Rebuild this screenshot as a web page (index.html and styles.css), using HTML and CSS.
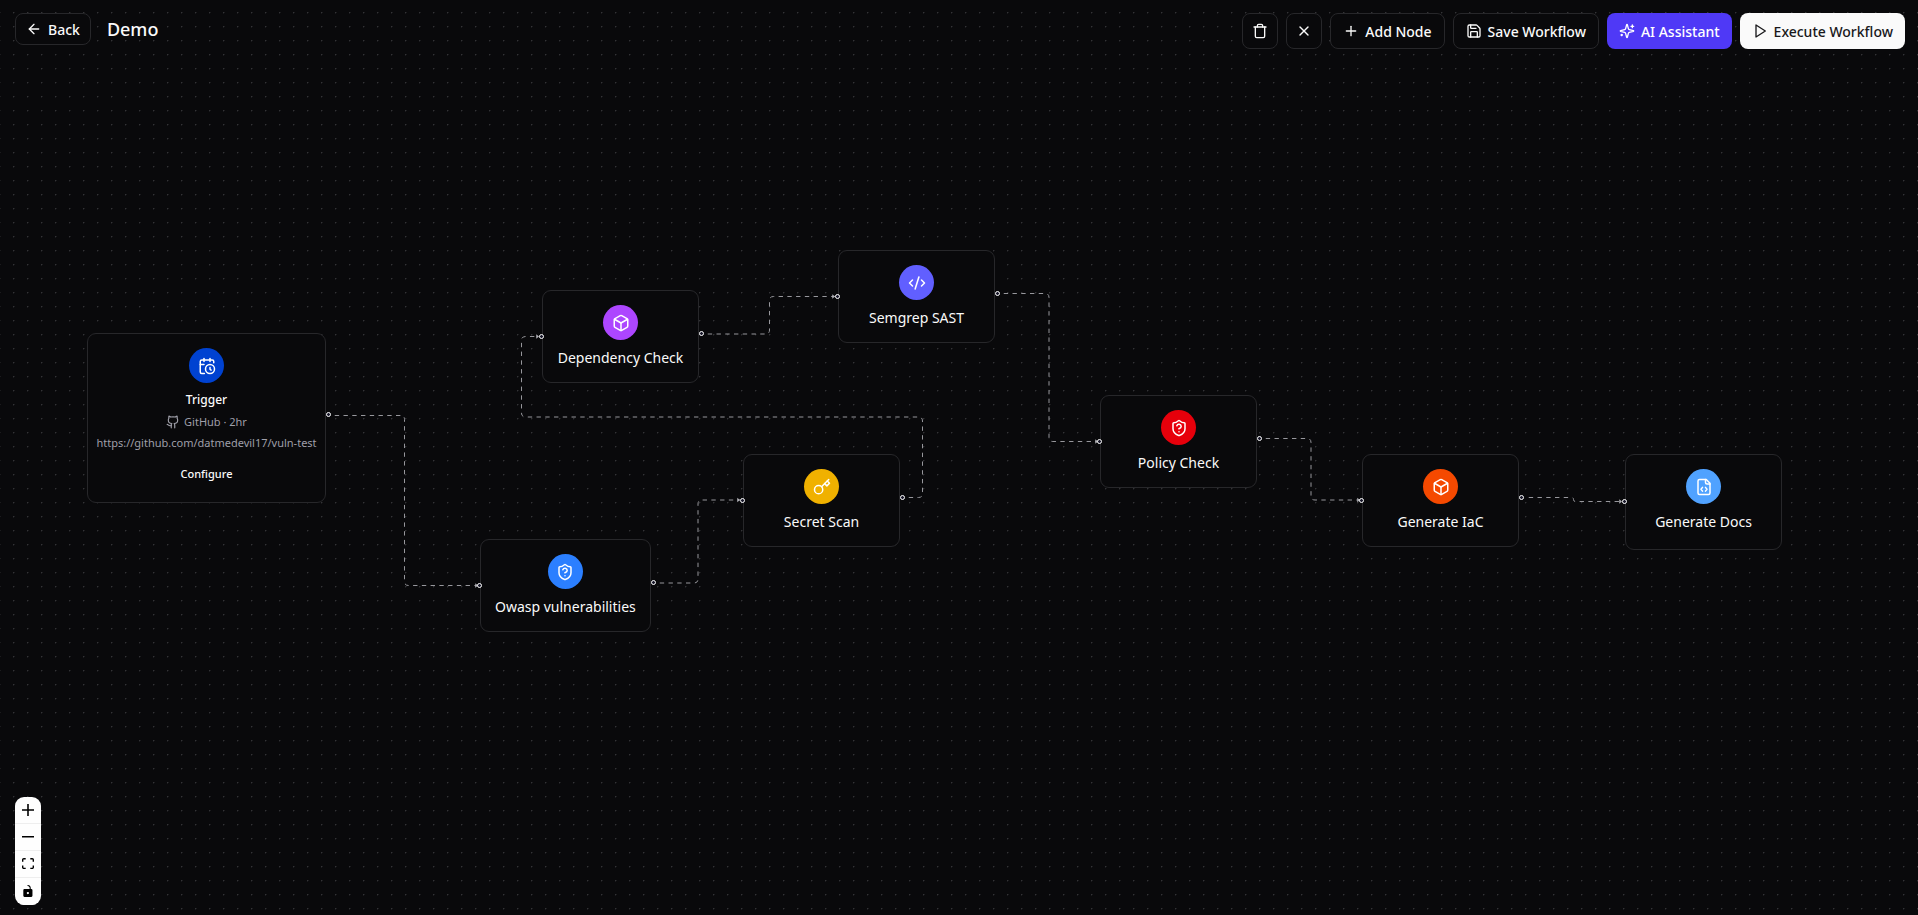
FILE: index.html
```html
<!DOCTYPE html>
<html lang="en">
<head>
    <meta charset="UTF-8">
    <meta name="viewport" content="width=device-width, initial-scale=1.0">
    <title>Demo</title>
    <link rel="stylesheet" href="styles.css">
</head>
<body>

    <header class="topbar">
        <div class="topbar-left">
            <button class="btn btn-small">
                <svg class="icon" viewBox="0 0 24 24"><path d="m12 19-7-7 7-7"/><path d="M19 12H5"/></svg>
                Back
            </button>
            <h1 class="title">Demo</h1>
        </div>
        <div class="topbar-right">
            <button class="btn btn-icon" aria-label="Delete">
                <svg class="icon" viewBox="0 0 24 24"><path d="M3 6h18"/><path d="M19 6v14a2 2 0 0 1-2 2H7a2 2 0 0 1-2-2V6"/><path d="M8 6V4a2 2 0 0 1 2-2h4a2 2 0 0 1 2 2v2"/></svg>
            </button>
            <button class="btn btn-icon" aria-label="Close">
                <svg class="icon" viewBox="0 0 24 24"><path d="M18 6 6 18"/><path d="m6 6 12 12"/></svg>
            </button>
            <button class="btn">
                <svg class="icon" viewBox="0 0 24 24"><path d="M5 12h14"/><path d="M12 5v14"/></svg>
                Add Node
            </button>
            <button class="btn">
                <svg class="icon" viewBox="0 0 24 24"><path d="M15.2 3a2 2 0 0 1 1.4.6l3.8 3.8a2 2 0 0 1 .6 1.4V19a2 2 0 0 1-2 2H5a2 2 0 0 1-2-2V5a2 2 0 0 1 2-2z"/><path d="M17 21v-7a1 1 0 0 0-1-1H8a1 1 0 0 0-1 1v7"/><path d="M7 3v4a1 1 0 0 0 1 1h7"/></svg>
                Save Workflow
            </button>
            <button class="btn btn-ai">
                <svg class="icon" viewBox="0 0 24 24"><path d="M9.937 15.5A2 2 0 0 0 8.5 14.063l-6.135-1.582a.5.5 0 0 1 0-.962L8.5 9.936A2 2 0 0 0 9.937 8.5l1.582-6.135a.5.5 0 0 1 .963 0L14.063 8.5A2 2 0 0 0 15.5 9.937l6.135 1.581a.5.5 0 0 1 0 .964L15.5 14.063a2 2 0 0 0-1.437 1.437l-1.582 6.135a.5.5 0 0 1-.963 0z"/><path d="M20 3v4"/><path d="M22 5h-4"/><path d="M4 17v2"/><path d="M5 18H3"/></svg>
                AI Assistant
            </button>
            <button class="btn btn-run">
                <svg class="icon" viewBox="0 0 24 24"><path d="m6 3 14 9-14 9z"/></svg>
                Execute Workflow
            </button>
        </div>
    </header>

    <main class="canvas">
        <svg class="edges">
            <defs>
                <marker id="arrow" viewBox="-10 -10 20 20" markerWidth="11" markerHeight="11" markerUnits="userSpaceOnUse" refX="0" refY="0" orient="auto">
                    <path class="arrow" d="M-5 -4 0 0 -5 4z"/>
                </marker>
            </defs>
            <path class="edge" d="M331 415.5H400.5Q404.5 415.5 404.5 419.5V581.5Q404.5 585.5 408.5 585.5H478"/>
            <path class="edge" d="M656 583H694Q698 583 698 579V504Q698 500 702 500H740"/>
            <path class="edge" d="M905 497.5H918.5Q922.5 497.5 922.5 493.5V421Q922.5 417 918.5 417H525.5Q521.5 417 521.5 413V340.5Q521.5 336.5 525.5 336.5H539"/>
            <path class="edge" d="M704 334H765.5Q769.5 334 769.5 330V300.5Q769.5 296.5 773.5 296.5H835"/>
            <path class="edge" d="M1000 293.5H1045Q1049 293.5 1049 297.5V437.5Q1049 441.5 1053 441.5H1098"/>
            <path class="edge" d="M1262 438.5H1307Q1311 438.5 1311 442.5V496Q1311 500 1315 500H1360"/>
            <path class="edge" d="M1525 497.5H1571.5Q1573.5 497.5 1573.5 499.5T1575.5 501.5H1622"/>
        </svg>

        <section class="node node-trigger">
            <span class="badge blue-dark"><svg class="icon" viewBox="0 0 24 24"><path d="M21 7.5V6a2 2 0 0 0-2-2H5a2 2 0 0 0-2 2v14a2 2 0 0 0 2 2h3.5"/><path d="M16 2v4"/><path d="M8 2v4"/><path d="M3 10h5"/><path d="M17.5 17.5 16 16.3V14"/><circle cx="16" cy="16" r="6"/></svg></span>
            <h2 class="trigger-name">Trigger</h2>
            <p class="trigger-source">
                <svg class="icon" viewBox="0 0 24 24"><path d="M15 22v-4a4.8 4.8 0 0 0-1-3.5c3 0 6-2 6-5.5.08-1.25-.27-2.48-1-3.5.28-1.15.28-2.35 0-3.5 0 0-1 0-3 1.5-2.64-.5-5.36-.5-8 0C6 2 5 2 5 2c-.3 1.15-.3 2.35 0 3.5A5.403 5.403 0 0 0 4 9c0 3.5 3 5.5 6 5.5-.39.49-.68 1.05-.85 1.65-.17.6-.22 1.23-.15 1.85v4"/><path d="M9 18c-4.51 2-5-2-7-2"/></svg>
                GitHub · 2hr
            </p>
            <p class="trigger-url">https://github.com/datmedevil17/vuln-test</p>
            <button class="configure">Configure</button>
            <i class="handle out"></i>
        </section>

        <section class="node node-owasp">
            <i class="handle in"></i>
            <span class="badge blue"><svg class="icon" viewBox="0 0 24 24"><path d="M20 13c0 5-3.5 7.5-7.66 8.95a1 1 0 0 1-.67-.01C7.5 20.5 4 18 4 13V6a1 1 0 0 1 1-1c2 0 4.5-1.2 6.24-2.72a1.17 1.17 0 0 1 1.52 0C14.51 3.81 17 5 19 5a1 1 0 0 1 1 1z"/><path d="M9.1 9a3 3 0 0 1 5.82 1c0 2-3 3-3 3"/><path d="M12 17h.01"/></svg></span>
            <h2 class="name">Owasp vulnerabilities</h2>
            <i class="handle out"></i>
        </section>

        <section class="node node-secret">
            <i class="handle in"></i>
            <span class="badge yellow"><svg class="icon" viewBox="0 0 24 24"><circle cx="7.5" cy="15.5" r="5.5"/><path d="m21 2-9.6 9.6"/><path d="m15.5 7.5 3 3L22 7l-3-3"/></svg></span>
            <h2 class="name">Secret Scan</h2>
            <i class="handle out"></i>
        </section>

        <section class="node node-dependency">
            <i class="handle in"></i>
            <span class="badge purple"><svg class="icon" viewBox="0 0 24 24"><path d="M21 8a2 2 0 0 0-1-1.73l-7-4a2 2 0 0 0-2 0l-7 4A2 2 0 0 0 3 8v8a2 2 0 0 0 1 1.73l7 4a2 2 0 0 0 2 0l7-4A2 2 0 0 0 21 16Z"/><path d="m3.3 7 8.7 5 8.7-5"/><path d="M12 22V12"/></svg></span>
            <h2 class="name">Dependency Check</h2>
            <i class="handle out"></i>
        </section>

        <section class="node node-semgrep">
            <i class="handle in"></i>
            <span class="badge indigo"><svg class="icon" viewBox="0 0 24 24"><path d="m18 16 4-4-4-4"/><path d="m6 8-4 4 4 4"/><path d="m14.5 4-5 16"/></svg></span>
            <h2 class="name">Semgrep SAST</h2>
            <i class="handle out"></i>
        </section>

        <section class="node node-policy">
            <i class="handle in"></i>
            <span class="badge red"><svg class="icon" viewBox="0 0 24 24"><path d="M20 13c0 5-3.5 7.5-7.66 8.95a1 1 0 0 1-.67-.01C7.5 20.5 4 18 4 13V6a1 1 0 0 1 1-1c2 0 4.5-1.2 6.24-2.72a1.17 1.17 0 0 1 1.52 0C14.51 3.81 17 5 19 5a1 1 0 0 1 1 1z"/><path d="M9.1 9a3 3 0 0 1 5.82 1c0 2-3 3-3 3"/><path d="M12 17h.01"/></svg></span>
            <h2 class="name">Policy Check</h2>
            <i class="handle out"></i>
        </section>

        <section class="node node-iac">
            <i class="handle in"></i>
            <span class="badge orange"><svg class="icon" viewBox="0 0 24 24"><path d="M21 8a2 2 0 0 0-1-1.73l-7-4a2 2 0 0 0-2 0l-7 4A2 2 0 0 0 3 8v8a2 2 0 0 0 1 1.73l7 4a2 2 0 0 0 2 0l7-4A2 2 0 0 0 21 16Z"/><path d="m3.3 7 8.7 5 8.7-5"/><path d="M12 22V12"/></svg></span>
            <h2 class="name">Generate IaC</h2>
            <i class="handle out"></i>
        </section>

        <section class="node node-docs">
            <i class="handle in"></i>
            <span class="badge sky"><svg class="icon" viewBox="0 0 24 24"><path d="M10 12.5 8 15l2 2.5"/><path d="m14 12.5 2 2.5-2 2.5"/><path d="M14 2v4a2 2 0 0 0 2 2h4"/><path d="M15 2H6a2 2 0 0 0-2 2v16a2 2 0 0 0 2 2h12a2 2 0 0 0 2-2V7z"/></svg></span>
            <h2 class="name">Generate Docs</h2>
        </section>
    </main>

    <div class="controls">
        <button aria-label="Zoom in"><svg viewBox="0 0 32 32"><path d="M32 18.133H18.133V32h-4.266V18.133H0v-4.266h13.867V0h4.266v13.867H32z"/></svg></button>
        <button aria-label="Zoom out"><svg viewBox="0 0 32 5"><path d="M0 0h32v4.2H0z"/></svg></button>
        <button aria-label="Fit view"><svg viewBox="0 0 32 30"><path d="M3.692 4.63c0-.53.4-.938.939-.938h5.215V0H4.708C2.13 0 0 2.054 0 4.63v5.216h3.692V4.631zM27.354 0h-5.2v3.692h5.17c.53 0 .984.4.984.939v5.215H32V4.631A4.624 4.624 0 0 0 27.354 0zm.954 24.83c0 .532-.4.94-.939.94h-5.215v3.768h5.215c2.577 0 4.631-2.13 4.631-4.707v-5.139h-3.692v5.139zm-23.677.94a.919.919 0 0 1-.939-.94v-5.138H0v5.139c0 2.577 2.13 4.707 4.708 4.707h5.138V25.77H4.631z"/></svg></button>
        <button aria-label="Lock"><svg viewBox="0 0 25 32"><path d="M21.333 10.667H19.81V7.619C19.81 3.429 16.38 0 12.19 0c-4.114 1.828-1.37 2.133.305 2.438 1.676.305 4.42 2.59 4.42 5.181v3.048H3.047A3.056 3.056 0 0 0 0 13.714v15.238A3.056 3.056 0 0 0 3.048 32h18.285a3.056 3.056 0 0 0 3.048-3.048V13.714a3.056 3.056 0 0 0-3.048-3.047zM12.19 24.533a3.056 3.056 0 0 1-3.047-3.047 3.056 3.056 0 0 1 3.047-3.048 3.056 3.056 0 0 1 3.048 3.048 3.056 3.056 0 0 1-3.047 3.047z"/></svg></button>
    </div>

</body>
</html>
```
FILE: styles.css
```css
*{
    box-sizing: border-box;
    margin: 0;
    padding: 0;
}
body{
    min-height: 100vh;
    overflow: hidden;
    background-color: #09090b;
    background-image: radial-gradient(circle at 0 0, #333336 1px, transparent 2px);
    background-size: 14px 14px;
    background-position: 13px 12px;
    color: #fafafa;
    font-family: "Noto Sans", sans-serif;
    font-size: 14px;
    line-height: 20px;
}
button{
    font: inherit;
    color: inherit;
    cursor: pointer;
}
.icon{
    width: 16px;
    height: 16px;
    flex-shrink: 0;
    fill: none;
    stroke: currentColor;
    stroke-width: 2;
    stroke-linecap: round;
    stroke-linejoin: round;
}

/* top bar */
.topbar{
    position: relative;
    z-index: 2;
    display: flex;
    justify-content: space-between;
    align-items: flex-start;
    padding: 13px 13px 0 15px;
}
.topbar-left{
    display: flex;
    align-items: center;
    gap: 16px;
}
.topbar-right{
    display: flex;
    gap: 8px;
}
.title{
    font-size: 18px;
    line-height: 28px;
    font-weight: 500;
}
.btn{
    display: flex;
    align-items: center;
    justify-content: center;
    gap: 6px;
    height: 36px;
    padding: 0 12px;
    background-color: #09090b;
    border: 1px solid #27272a;
    border-radius: 8px;
    line-height: 21px;
    font-weight: 500;
}
.btn:hover{
    background-color: #18181b;
}
.btn-small{
    height: 32px;
    padding: 0 10px;
}
.btn-icon{
    width: 36px;
    padding: 0;
}
.btn-ai{
    background-color: #4f39f6;
    border: 0;
    color: #fff;
}
.btn-ai:hover{
    background-color: #432dd7;
}
.btn-run{
    background-color: #fafafa;
    border: 0;
    color: #18181b;
}
.btn-run:hover{
    background-color: #e4e4e7;
}

/* edges between the nodes */
.canvas{
    position: absolute;
    inset: 0;
}
.edges{
    position: absolute;
    width: 100%;
    height: 100%;
}
.edge{
    fill: none;
    stroke: #97979c;
    stroke-width: 1;
    stroke-dasharray: 4.375;
    stroke-dashoffset: 5;
    marker-end: url(#arrow);
}
.arrow{
    fill: #b1b1b7;
}

/* nodes */
.node{
    position: absolute;
    display: flex;
    flex-direction: column;
    align-items: center;
    min-width: 157px;
    padding: 14px;
    background-color: #09090b;
    border: 1px solid #27272a;
    border-radius: 9px;
    white-space: nowrap;
}
.node-trigger{ left: 87px; top: 333px; min-width: 239px; padding: 14px 8px; }
.node-owasp{ left: 480px; top: 539px; }
.node-secret{ left: 743px; top: 454px; }
.node-dependency{ left: 542px; top: 290px; }
.node-semgrep{ left: 838px; top: 250px; }
.node-policy{ left: 1100px; top: 395px; }
.node-iac{ left: 1362px; top: 454px; }
.node-docs{ left: 1625px; top: 454px; min-height: 96px; }

.badge{
    display: flex;
    align-items: center;
    justify-content: center;
    width: 35px;
    height: 35px;
    margin-bottom: 8px;
    border-radius: 50%;
    color: #fff;
}
.badge .icon{
    width: 18px;
    height: 18px;
}
.blue-dark{ background-color: #0042d1; }
.blue{ background-color: #2b7fff; }
.yellow{ background-color: #f0b100; }
.purple{ background-color: #ad46ff; }
.indigo{ background-color: #615fff; }
.red{ background-color: #e7000b; }
.orange{ background-color: #f54900; }
.sky{ background-color: #50a2ff; }

.name{
    font-size: 14px;
    font-weight: 400;
}
.trigger-name{
    font-size: 12px;
    line-height: 18px;
    font-weight: 500;
}
.trigger-source,
.trigger-url{
    color: #9f9fa9;
    font-size: 11px;
    line-height: 16px;
}
.trigger-source{
    display: flex;
    align-items: center;
    gap: 4px;
    margin: 5px 0;
}
.trigger-source .icon{
    width: 14px;
    height: 14px;
}
.configure{
    height: 28px;
    margin-top: 9px;
    padding: 0 10px;
    background: none;
    border: 0;
    border-radius: 6px;
    font-size: 11px;
    font-weight: 500;
}
.configure:hover{
    background-color: #27272a;
}

.handle{
    position: absolute;
    top: 50%;
    width: 5px;
    height: 5px;
    margin-top: -3px;
    background-color: #1a192b;
    border: 1px solid #fff;
    border-radius: 50%;
}
.handle.in{
    left: -4px;
}
.handle.out{
    right: -6px;
    margin-top: -6px;
}

/* zoom controls */
.controls{
    position: absolute;
    left: 15px;
    bottom: 10px;
    z-index: 2;
    display: flex;
    flex-direction: column;
    overflow: hidden;
    background-color: #fefefe;
    border-radius: 9px;
}
.controls button{
    display: flex;
    align-items: center;
    justify-content: center;
    width: 26px;
    height: 27px;
    background: none;
    border: 0;
    border-bottom: 1px solid #eee;
    color: #000;
}
.controls button:last-child{
    border-bottom-color: #fefefe;
}
.controls button:hover{
    background-color: #f4f4f4;
}
.controls svg{
    width: 12px;
    max-height: 12px;
    fill: currentColor;
}
```
